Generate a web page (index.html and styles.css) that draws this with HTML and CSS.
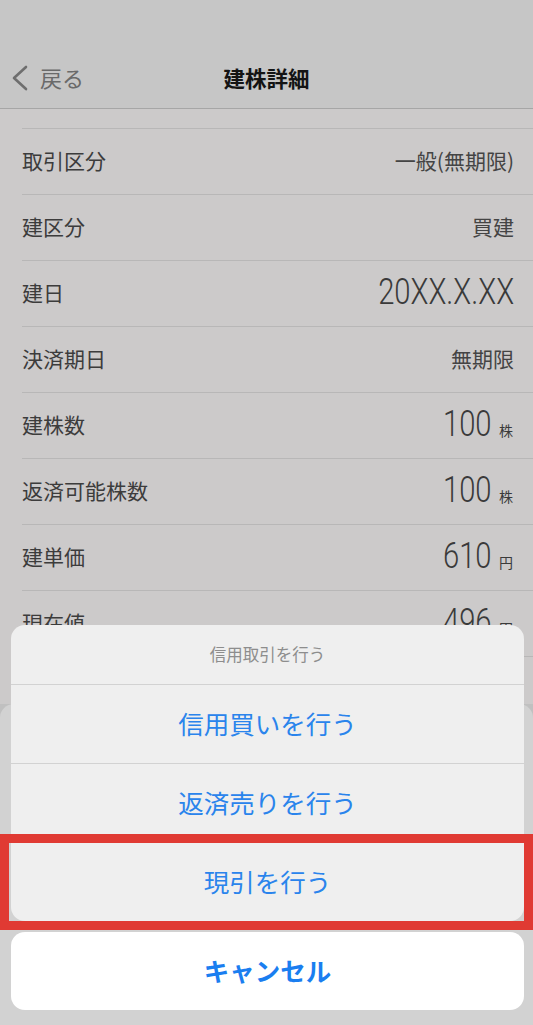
FILE: index.html
```html
<!DOCTYPE html>
<html lang="ja">
<head>
<meta charset="utf-8">
<title>建株詳細</title>
<link rel="stylesheet" href="styles.css">
</head>
<body>
<div class="screen">
  <header class="navbar">
    <div class="nav-row">
      <a class="back">
        <svg class="chev" width="18" height="26" viewBox="0 0 18 26"><polyline points="15,2 3,13 15,24" fill="none" stroke="#6e6e6e" stroke-width="2.6" stroke-linecap="round" stroke-linejoin="round"/></svg>
        <span>戻る</span>
      </a>
      <h1 class="title">建株詳細</h1>
    </div>
  </header>

  <main class="list">
    <div class="row"><span class="label">取引区分</span><span class="value">一般(無期限)</span></div>
    <div class="row"><span class="label">建区分</span><span class="value">買建</span></div>
    <div class="row"><span class="label">建日</span><span class="num"><span class="digits">20XX.X.XX</span></span></div>
    <div class="row"><span class="label">決済期日</span><span class="value">無期限</span></div>
    <div class="row"><span class="label">建株数</span><span class="num"><span class="digits">100</span><span class="unit">株</span></span></div>
    <div class="row"><span class="label">返済可能株数</span><span class="num"><span class="digits">100</span><span class="unit">株</span></span></div>
    <div class="row"><span class="label">建単価</span><span class="num"><span class="digits">610</span><span class="unit">円</span></span></div>
    <div class="row"><span class="label">現在値</span><span class="num"><span class="digits">496</span><span class="unit">円</span></span></div>
    <div class="row"></div>
  </main>
  <div class="footer"></div>

  <div class="sheet-wrap">
    <div class="sheet">
      <div class="sheet-title">信用取引を行う</div>
      <button class="sheet-item">信用買いを行う</button>
      <button class="sheet-item">返済売りを行う</button>
      <button class="sheet-item">現引を行う</button>
    </div>
    <button class="cancel">キャンセル</button>
  </div>

  <div class="highlight"></div>
</div>
</body>
</html>
```

FILE: styles.css
```css
* { box-sizing: border-box; }
html, body { margin: 0; padding: 0; }
body {
  background: #c0c0c0;
  font-family: "Noto Sans CJK JP", "Noto Sans", sans-serif;
}
.screen {
  position: relative;
  width: 533px;
  height: 1025px;
  overflow: hidden;
  background: #c0c0c0;
}
.navbar {
  height: 109px;
  background: #c6c6c6;
  border-bottom: 1px solid #a6a6a6;
  padding-top: 48px;
}
.nav-row {
  position: relative;
  height: 58px;
  display: flex;
  align-items: center;
  justify-content: center;
}
.back {
  position: absolute;
  left: 11px;
  top: 0;
  height: 58px;
  display: flex;
  align-items: center;
  gap: 11px;
  color: #6a6a6a;
  font-size: 22px;
}
.chev { display: block; margin-top: 2px; }
.title {
  margin: 0;
  font-size: 21.5px;
  font-weight: 700;
  color: #141414;
}
.list {
  background: #cccaca;
  padding-top: 19px;
}
.row {
  margin-left: 22px;
  border-top: 1px solid #b8b7b7;
  height: 66px;
  padding-right: 19px;
  padding-bottom: 3px;
  display: flex;
  align-items: center;
  justify-content: space-between;
}
.row:last-child { height: 48px; }
.label {
  font-size: 21px;
  color: #3c3c3c;
}
.value {
  font-size: 21px;
  color: #444;
}
.num {
  display: flex;
  align-items: baseline;
  color: #3a3a3a;
  margin-top: -2px;
}
.digits {
  display: inline-block;
  font-family: Roboto, "Liberation Sans", sans-serif;
  font-weight: 300;
  font-size: 37px;
  line-height: 1;
  transform: scaleX(0.79);
  transform-origin: right center;
}
.unit {
  font-size: 14px;
  margin-left: 7px;
  margin-right: 1px;
}
.footer {
  height: 400px;
  background: #d2d2d2;
  border-radius: 14px 14px 0 0;
}
.sheet-wrap {
  position: absolute;
  left: 11px;
  right: 9px;
  top: 625px;
  display: flex;
  flex-direction: column;
  gap: 11px;
}
.sheet {
  background: #efefef;
  border-radius: 14px;
  overflow: hidden;
  display: flex;
  flex-direction: column;
}
.sheet-title {
  height: 60px;
  display: flex;
  align-items: center;
  justify-content: center;
  font-size: 16.5px;
  color: #8d8d8d;
  border-bottom: 1px solid #d2d2d2;
  padding-bottom: 2px;
}
.sheet-item {
  height: 79px;
  border: 0;
  border-bottom: 1px solid #d2d2d2;
  background: transparent;
  font-family: inherit;
  font-size: 25.5px;
  color: #2a84ec;
  padding: 0 0 3px;
}
.sheet-item:last-child { border-bottom: 0; height: 78px; }
.cancel {
  height: 78px;
  border: 0;
  border-radius: 14px;
  background: #ffffff;
  font-family: inherit;
  font-size: 25.5px;
  font-weight: 700;
  color: #1a7ef0;
  padding: 0 0 3px;
}
.highlight {
  position: absolute;
  left: 0;
  top: 834px;
  width: 533px;
  height: 96px;
  border: 9px solid #e03a33;
}
```
